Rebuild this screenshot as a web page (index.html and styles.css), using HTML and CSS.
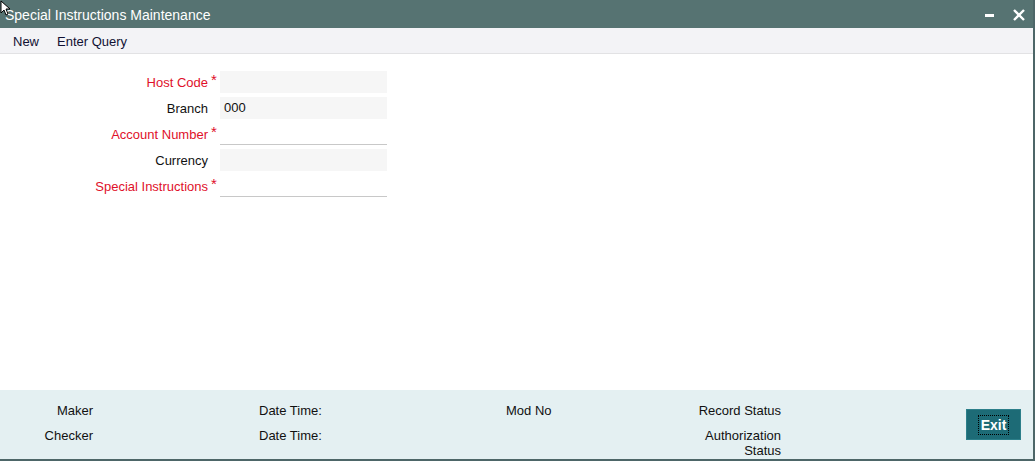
FILE: index.html
```html
<!DOCTYPE html>
<html>
<head>
<meta charset="utf-8">
<link rel="stylesheet" href="styles.css">
</head>
<body>
<div class="window">
  <div class="titlebar">
    <span class="title">Special Instructions Maintenance</span>
    <div class="controls">
      <span class="min"></span>
      <svg class="close" width="14" height="14" viewBox="0 0 14 14"><path d="M2 2 L12 12 M12 2 L2 12" stroke="#fff" stroke-width="2.4" fill="none"/></svg>
    </div>
    <svg class="cursor" width="14" height="16" viewBox="0 0 14 16"><path d="M1 1 L1 13 L4 10 L6 15 L8 14 L6 9 L10 9 Z" fill="#fff" stroke="#000" stroke-width="1"/></svg>
  </div>
  <div class="toolbar">
    <span class="tool">New</span>
    <span class="tool">Enter Query</span>
  </div>
  <div class="content">
    <div class="form">
      <label class="lbl req">Host Code</label><span class="star">*</span><div class="inp grey"></div>
      <label class="lbl">Branch</label><span class="star"></span><div class="inp grey">000</div>
      <label class="lbl req">Account Number</label><span class="star">*</span><div class="inp line"></div>
      <label class="lbl">Currency</label><span class="star"></span><div class="inp grey"></div>
      <label class="lbl req">Special Instructions</label><span class="star">*</span><div class="inp line"></div>
    </div>
  </div>
  <div class="footer">
    <div class="audit">
      <span class="c1">Maker</span><span></span><span class="c3">Date Time:</span><span class="c4">Mod No</span><span class="c5">Record Status</span>
      <span class="c1">Checker</span><span></span><span class="c3">Date Time:</span><span class="c4"></span><span class="c5 wrap">Authorization Status</span>
    </div>
    <button class="exit"><span class="focus">Exit</span></button>
  </div>
</div>
</body>
</html>
```
FILE: styles.css
```css
html, body {
  margin: 0;
  padding: 0;
  background: #fff;
}
body {
  font-family: "Liberation Sans", Arial, sans-serif;
  font-size: 13px;
  color: #1a1a2e;
}
.window {
  width: 1035px;
  height: 461px;
  box-sizing: border-box;
  display: flex;
  flex-direction: column;
  border-right: 2px solid #4d6668;
  border-bottom: 2px solid #4d6668;
  overflow: hidden;
}
.titlebar {
  position: relative;
  height: 28px;
  flex: none;
  background: #567372;
  display: flex;
  align-items: center;
  justify-content: space-between;
  padding: 0 9px 0 5px;
  margin-right: -2px;
}
.title {
  color: #fff;
  font-size: 14px;
  padding-top: 2px;
}
.controls {
  display: flex;
  align-items: center;
  gap: 18px;
  padding-top: 2px;
}
.min {
  display: block;
  width: 9px;
  height: 3px;
  background: #fff;
}
.close { display: block; }
.cursor {
  position: absolute;
  left: 0;
  top: 0;
}
.toolbar {
  height: 24px;
  flex: none;
  background: #f3f3f6;
  border-bottom: 1px solid #e2e2e4;
  display: flex;
  align-items: center;
  gap: 18px;
  padding-left: 13px;
  padding-top: 1px;
}
.tool {
  font-size: 13px;
  color: #111133;
}
.content {
  flex: 1;
  padding-top: 17px;
}
.form {
  display: grid;
  grid-template-columns: 208px 12px 167px;
  grid-auto-rows: 26px;
}
.lbl {
  text-align: right;
  font-size: 13px;
  color: #111;
  line-height: 23px;
}
.lbl.req { color: #e0102a; }
.star {
  color: #e0102a;
  font-size: 15px;
  line-height: 18px;
  padding-left: 3px;
}
.inp {
  height: 22px;
  box-sizing: border-box;
  line-height: 22px;
  padding-left: 4px;
  font-size: 13px;
  color: #111;
}
.inp.grey { background: #f6f6f6; }
.inp.line { border-bottom: 1px solid #c8c8c8; }
.footer {
  height: 69px;
  flex: none;
  background: #e4f0f2;
  display: flex;
  align-items: flex-start;
}
.audit {
  display: grid;
  grid-template-columns: 93px 166px 247px 184px 91px;
  grid-template-rows: 25px 30px;
  padding-top: 13px;
  font-size: 13px;
  color: #111;
  line-height: 16px;
}
.c1, .c5 { text-align: right; }
.wrap { line-height: 15px; }
.exit {
  margin-left: 185px;
  margin-top: 19px;
  width: 55px;
  height: 31px;
  background: #1d6b76;
  border: 1px solid #2c7f8a;
  color: #fff;
  font-family: "Liberation Sans", Arial, sans-serif;
  font-weight: bold;
  font-size: 14px;
  padding: 0;
  display: flex;
  align-items: center;
  justify-content: center;
}
.focus {
  outline: 1px dotted #000;
  padding: 1px 2px;
}
```
